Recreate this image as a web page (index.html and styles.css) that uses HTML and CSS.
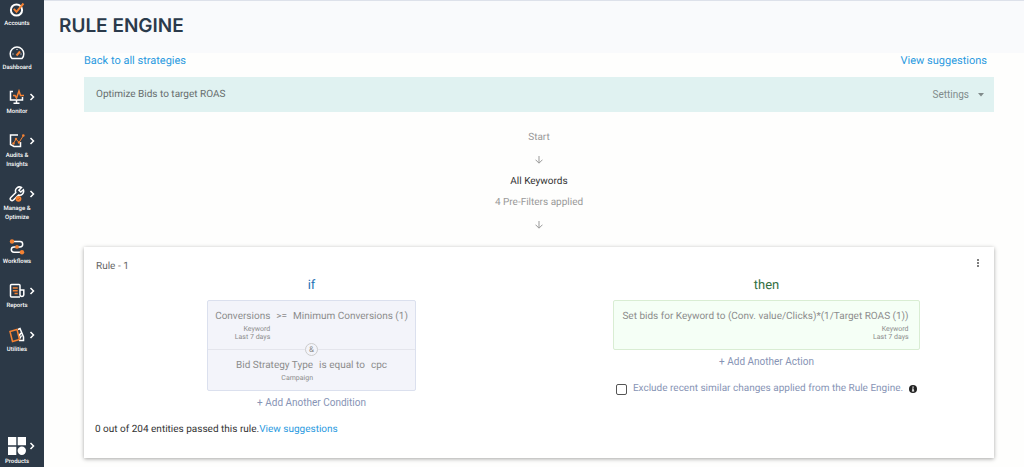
FILE: index.html
```html
<!DOCTYPE html>
<html lang="en">
<head>
<meta charset="utf-8">
<title>Rule Engine</title>
<link rel="stylesheet" href="styles.css">
</head>
<body>
<div class="app">
  <nav class="sidebar" aria-label="Main">
    <a class="nav-item" href="#">
      <svg class="nav-icon" viewBox="0 0 16 16"><circle cx="7.500" cy="9" r="5.600" class="ln thick"/><path d="M4.800 7.800l2.700 3L14.500 2.500" class="or thick"/></svg>
      <span class="nav-label">Accounts</span>
    </a>
    <a class="nav-item" href="#">
      <svg class="nav-icon" viewBox="0 0 16 16"><path d="M3 13.500A6.800 6.800 0 1 1 13 13.500z" class="ln"/><path d="M7.500 10.500L11 6.500" class="or thick"/><path d="M3.500 9h1M8 4v1M12.500 9h-1" class="ln thin"/></svg>
      <span class="nav-label">Dashboard</span>
    </a>
    <a class="nav-item" href="#">
      <svg class="nav-icon" viewBox="0 0 16 16"><path d="M4 2.500H1.500v8.500h12V8M7.500 11v3M4.500 14.200h6" class="ln"/><path d="M4 6.500h2L7.500 9l2.500-7 1.500 4.500h3.500" class="or"/></svg>
      <svg class="chevron" viewBox="0 0 6 8"><path d="M1.500 1L4.500 4 1.500 7" class="ln"/></svg>
      <span class="nav-label">Monitor</span>
    </a>
    <a class="nav-item" href="#">
      <svg class="nav-icon" viewBox="0 0 16 16"><path d="M9 2H1.500v9.500L5 13.500h6.500V9" class="ln"/><path d="M4.500 10.500L7 6l3 3.500L14.500 2.500" class="or thin"/><g class="dot"><circle cx="4.500" cy="10.500" r="1.200"/><circle cx="7" cy="6" r="1.200"/><circle cx="10" cy="9.500" r="1.200"/><circle cx="14.300" cy="2.500" r="1.300"/></g></svg>
      <svg class="chevron" viewBox="0 0 6 8"><path d="M1.500 1L4.500 4 1.500 7" class="ln"/></svg>
      <span class="nav-label">Audits &amp;<br>Insights</span>
    </a>
    <a class="nav-item" href="#">
      <svg class="nav-icon" viewBox="0 0 16 16"><path d="M12.500 1.500A4 4 0 0 0 6.800 6.500L1.800 11.500a1.800 1.800 0 0 0 2.700 2.600L9.500 9A4 4 0 0 0 14.400 3.800L11.800 6 9.900 4.200z" class="ln"/><circle cx="9.500" cy="12.800" r="2.900" class="dot"/><path d="M8.200 12.800l1 1 1.700-2" class="ln dark"/></svg>
      <svg class="chevron" viewBox="0 0 6 8"><path d="M1.500 1L4.500 4 1.500 7" class="ln"/></svg>
      <span class="nav-label">Manage &amp;<br>Optimize</span>
    </a>
    <a class="nav-item" href="#">
      <svg class="nav-icon" viewBox="0 0 16 16"><path d="M3 2.500h8a2.700 2.700 0 0 1 0 5.400H5a2.700 2.700 0 0 0 0 5.400h7" class="ln"/><g class="dot"><circle cx="3" cy="2.500" r="2.200"/><circle cx="8" cy="7.900" r="1.900"/><circle cx="13" cy="13.300" r="2.200"/></g></svg>
      <span class="nav-label">Workflows</span>
    </a>
    <a class="nav-item" href="#">
      <svg class="nav-icon" viewBox="0 0 16 16"><path d="M11 14H2.500a1 1 0 0 1-1-1V2.500a1 1 0 0 1 1-1H10a1 1 0 0 1 1 1V12a2 2 0 0 0 3.800 0V7H11" class="ln"/><path d="M3.800 5h4.900M3.800 7.800h4.900M5.500 10.600h3.200" class="or"/></svg>
      <svg class="chevron" viewBox="0 0 6 8"><path d="M1.500 1L4.500 4 1.500 7" class="ln"/></svg>
      <span class="nav-label">Reports</span>
    </a>
    <a class="nav-item" href="#">
      <svg class="nav-icon" viewBox="0 0 16 16"><path d="M9 2.500l2-1 3.500 8.500v3.500H10M12 6L9.500 9.500M12.500 8.500L10.500 12" class="ln"/><path d="M1 4.500l7-2 2.500 10-7 2z" class="or"/></svg>
      <svg class="chevron" viewBox="0 0 6 8"><path d="M1.500 1L4.500 4 1.500 7" class="ln"/></svg>
      <span class="nav-label">Utilities</span>
    </a>
    <a class="nav-item products" href="#">
      <svg class="nav-icon large" viewBox="0 0 18 18"><path d="M0 0h8.300v8.300H0zM9.700 0H18v8.300H9.700zM0 9.700h8.300V18H0z" fill="#fff"/><circle cx="13.800" cy="13.800" r="4.200" fill="#fff"/></svg>
      <svg class="chevron" viewBox="0 0 6 8"><path d="M1.500 1L4.500 4 1.500 7" class="ln"/></svg>
      <span class="nav-label">Products</span>
    </a>
  </nav>

  <div class="page">
    <header class="page-header"><h1 class="title">RULE ENGINE</h1></header>
    <main class="content">
      <div class="links">
        <a class="link" href="#">Back to all strategies</a>
        <a class="link" href="#">View suggestions</a>
      </div>
      <div class="strategy">
        <span>Optimize Bids to target ROAS</span>
        <button class="settings" type="button">Settings
          <svg class="caret" viewBox="0 0 6 4"><path d="M0 0h6L3 3.500z" fill="#808b8b"/></svg>
        </button>
      </div>
      <div class="flow">
        <span>Start</span>
        <svg class="arrow" viewBox="0 0 8 8"><path d="M4 0v7M.500 3.700L4 7.200l3.500-3.500"/></svg>
        <div class="scope">
          <span class="scope-name">All Keywords</span>
          <span>4 Pre-Filters applied</span>
        </div>
        <svg class="arrow" viewBox="0 0 8 8"><path d="M4 0v7M.500 3.700L4 7.200l3.500-3.500"/></svg>
      </div>

      <section class="card">
        <div class="card-head">
          <h2 class="rule-name">Rule - 1</h2>
          <button class="more" type="button" aria-label="Rule menu"><svg class="more-icon" viewBox="0 0 4 8"><g fill="#555"><circle cx="2" cy="1" r="1"/><circle cx="2" cy="4" r="1"/><circle cx="2" cy="7" r="1"/></g></svg></button>
        </div>
        <div class="columns">
          <div class="column">
            <h3 class="clause if">if</h3>
            <div class="box conditions">
              <div class="condition">
                <div class="operand">Conversions<small class="note">Keyword</small><small class="note">Last 7 days</small></div>
                <span>&gt;=</span>
                <span>Minimum Conversions (1)</span>
              </div>
              <div class="joiner"><span class="amp">&amp;</span></div>
              <div class="condition">
                <div class="operand">Bid Strategy Type<small class="note">Campaign</small></div>
                <span>is equal to</span>
                <span>cpc</span>
              </div>
            </div>
            <button class="add" type="button">+ Add Another Condition</button>
          </div>
          <div class="column">
            <h3 class="clause then">then</h3>
            <div class="box action">
              <div class="operand">Set bids for Keyword to (Conv. value/Clicks)*(1/Target ROAS (1))<small class="note">Keyword</small><small class="note">Last 7 days</small></div>
            </div>
            <button class="add" type="button">+ Add Another Action</button>
            <div class="exclude">
              <input class="check" type="checkbox" id="exclude">
              <label for="exclude">Exclude recent similar changes applied from the Rule Engine.</label>
              <svg class="info" viewBox="0 0 8 8"><circle cx="4" cy="4" r="4" fill="#222"/><path d="M3.400 1.500h1.300v1.200H3.400zM3 3.400h1.700v2.200h.5v.8H2.900v-.8h.5V4.200H3z" fill="#fff"/></svg>
            </div>
          </div>
        </div>
        <p class="result">0 out of 204 entities passed this rule.<a class="result-link" href="#">View suggestions</a></p>
      </section>
    </main>
  </div>
</div>
</body>
</html>
```
FILE: styles.css
```css
* { box-sizing: border-box; }
body {
  margin: 0;
  background: #fefefd;
  color: #8c8c8c;
  font: 10px/16px Roboto, "Liberation Sans", sans-serif;
  text-rendering: geometricPrecision;
}
button { border: 0; padding: 0; background: none; color: inherit; font: inherit; cursor: pointer; }
a { text-decoration: none; }
svg { display: block; }

.app { display: flex; min-height: 100vh; }

.sidebar {
  display: flex;
  flex-direction: column;
  gap: 17px;
  width: 44px;
  flex: none;
  padding: 1px 0 2px;
  background: #2c3947;
}
.nav-item {
  display: grid;
  grid-template-columns: 24px 6px;
  row-gap: 2px;
  align-items: center;
  justify-items: center;
  padding-left: 5px;
  color: #fff;
}
.nav-icon { width: 16px; height: 16px; }
.nav-icon.large { width: 18px; height: 18px; }
.chevron { width: 6px; height: 8px; }
.nav-label {
  grid-column: 1;
  grid-row: 2;
  font-size: 6px;
  font-weight: 500;
  line-height: 9px;
  text-align: center;
  white-space: nowrap;
}
.products { margin-top: auto; }
.ln { fill: none; stroke: #fff; stroke-width: 1.5; }
.or { fill: none; stroke: #f58233; stroke-width: 1.5; }
.dot { fill: #f58233; }
.thick { stroke-width: 2; }
.thin { stroke-width: 1; }
.dark { stroke: #b85a1c; stroke-width: 1; }

.page { flex: 1; min-width: 0; }
.page-header {
  height: 53px;
  padding: 13px 15px;
  border-top: 1px solid #dde1ea;
  background: #f9fafc;
}
.title { margin: 0; color: #2b3a4b; font: 600 19px/24px Inter, sans-serif; }

.content { padding: 0 30px 10px 40px; }
.links { display: flex; justify-content: space-between; height: 24px; padding-right: 7px; }
.link { color: #2a9ae0; font-size: 11px; }
.strategy {
  display: flex;
  justify-content: space-between;
  align-items: center;
  height: 35px;
  padding: 1px 10px 0 12px;
  background: #e0f2f1;
  color: #666d6d;
}
.settings { display: flex; align-items: center; gap: 9px; color: #808b8b; }
.caret { width: 6px; height: 4px; }

.flow { display: flex; flex-direction: column; align-items: center; gap: 10px; padding: 18px 0; color: #999; }
.arrow { width: 8px; height: 8px; fill: none; stroke: #999; }
.scope { display: flex; flex-direction: column; align-items: center; gap: 5px; }
.scope-name { color: #333; }

.card { padding: 12px 0 20px; background: #fff; box-shadow: 0 1px 4px rgba(0, 0, 0, .35); }
.card-head { display: flex; justify-content: space-between; padding: 0 14px 0 12px; }
.rule-name { margin: 0; color: #666; font-size: 10px; font-weight: 400; }
.more { align-self: flex-start; }
.more-icon { width: 4px; height: 8px; }
.columns { display: grid; grid-template-columns: 1fr 1fr; }
.column { display: flex; flex-direction: column; align-items: center; }
.clause { margin: 3px 0 6px; font-size: 13px; font-weight: 400; }
.if { color: #2573b5; }
.then { color: #33703f; }
.box { border: 1px solid #dbe0ee; border-radius: 2px; background: #f3f4fa; }
.condition { display: flex; justify-content: center; gap: 6px; padding: 8px 7px; }
.operand { text-align: right; }
.note { display: block; font-size: 7px; line-height: 8px; }
.joiner { display: flex; align-items: center; height: 1px; background: #e4e5ec; justify-content: center; }
.amp {
  width: 13px;
  height: 13px;
  flex: none;
  border: 1px solid #ccc;
  border-radius: 50%;
  background: #f3f4fa;
  font-size: 8px;
  line-height: 11px;
  text-align: center;
}
.action { padding: 8px 10px 8px 8px; border-color: #d9edd3; background: #f5fff6; }
.add { margin-top: 4px; color: #8794b5; }
.exclude { display: flex; align-items: center; gap: 6px; margin-top: 11px; color: #8794b5; }
.check { appearance: none; width: 11px; height: 11px; margin: 0; border: 1px solid #555; border-radius: 2px; background: #fff; }
.info { width: 8px; height: 8px; }
.result { margin: 11px 0 0; padding: 0 11px; color: #333; }
.result-link { color: #2a9ae0; }
```
